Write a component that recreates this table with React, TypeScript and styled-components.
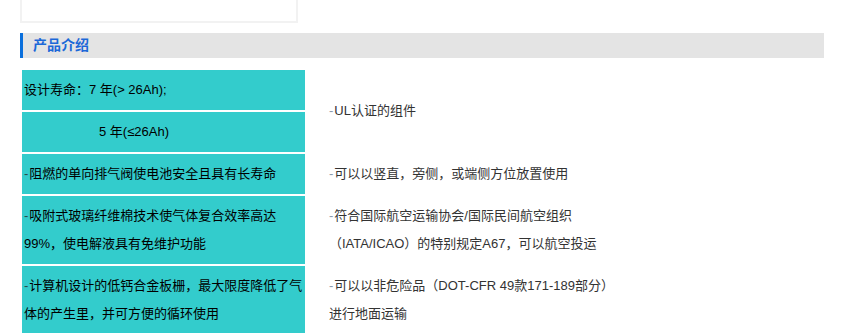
import React from "react";
import styled, { createGlobalStyle } from "styled-components";

const GlobalStyle = createGlobalStyle`
  body {
    margin: 0;
    background: #fff;
    font-family: "Liberation Sans", "Noto Sans CJK SC", sans-serif;
  }
`;

const Page = styled.div`
  padding-left: 20px;
  width: 804px;
`;

const TopBox = styled.div`
  width: 274px;
  height: 21px;
  border: 2px solid #f2f2f2;
  border-top: none;
`;

const SectionBar = styled.div`
  margin-top: 10px;
  height: 25px;
  background: #e4e4e4;
  border-left: 3px solid #0a6fdc;
  display: flex;
  align-items: center;
`;

const SectionTitle = styled.h2`
  margin: 0 0 0 10px;
  font-size: 14px;
  font-weight: bold;
  color: #1c68d8;
  line-height: 25px;
`;

const Table = styled.div`
  margin-top: 10px;
  display: grid;
  grid-template-columns: 283px 1fr;
  grid-template-rows: 40px 40px 40px 68px 68px;
  gap: 2px;
  padding: 2px;
`;

const LeftCell = styled.div<{ $indent?: number }>`
  background: #33cccc;
  color: #000;
  font-size: 13px;
  line-height: 28px;
  padding: 6px 0 6px ${(p) => 2 + (p.$indent ?? 0)}px;
  display: flex;
  align-items: center;
  white-space: nowrap;
`;

const RightCell = styled.div<{ $span?: number }>`
  grid-row: span ${(p) => p.$span ?? 1};
  color: #333;
  font-size: 13px;
  line-height: 28px;
  padding: 6px 0 6px 22px;
  display: flex;
  align-items: center;
  white-space: nowrap;
`;

const Dash = styled.span<{ $light?: boolean }>`
  color: ${(p) => (p.$light ? "#8a9aab" : "#2a4a4a")};
  margin-right: 1px;
`;

export default function App() {
  return (
    <Page>
      <GlobalStyle />
      <TopBox />
      <SectionBar>
        <SectionTitle>产品介绍</SectionTitle>
      </SectionBar>
      <Table>
        <LeftCell>设计寿命：7 年(&gt; 26Ah);</LeftCell>
        <RightCell $span={2}>
          <span>
            <Dash $light>-</Dash>UL认证的组件
          </span>
        </RightCell>
        <LeftCell $indent={75}>5 年(≤26Ah)</LeftCell>

        <LeftCell>
          <span>
            <Dash>-</Dash>阻燃的单向排气阀使电池安全且具有长寿命
          </span>
        </LeftCell>
        <RightCell>
          <span>
            <Dash $light>-</Dash>可以以竖直，旁侧，或端侧方位放置使用
          </span>
        </RightCell>

        <LeftCell>
          <span>
            <Dash>-</Dash>吸附式玻璃纤维棉技术使气体复合效率高达
            <br />
            99%，使电解液具有免维护功能
          </span>
        </LeftCell>
        <RightCell>
          <span>
            <Dash $light>-</Dash>符合国际航空运输协会/国际民间航空组织
            <br />
            （IATA/ICAO）的特别规定A67，可以航空投运
          </span>
        </RightCell>

        <LeftCell>
          <span>
            <Dash>-</Dash>计算机设计的低钙合金板栅，最大限度降低了气
            <br />
            体的产生里，并可方便的循环使用
          </span>
        </LeftCell>
        <RightCell>
          <span>
            <Dash $light>-</Dash>可以以非危险品（DOT-CFR 49款171-189部分）
            <br />
            进行地面运输
          </span>
        </RightCell>
      </Table>
    </Page>
  );
}
